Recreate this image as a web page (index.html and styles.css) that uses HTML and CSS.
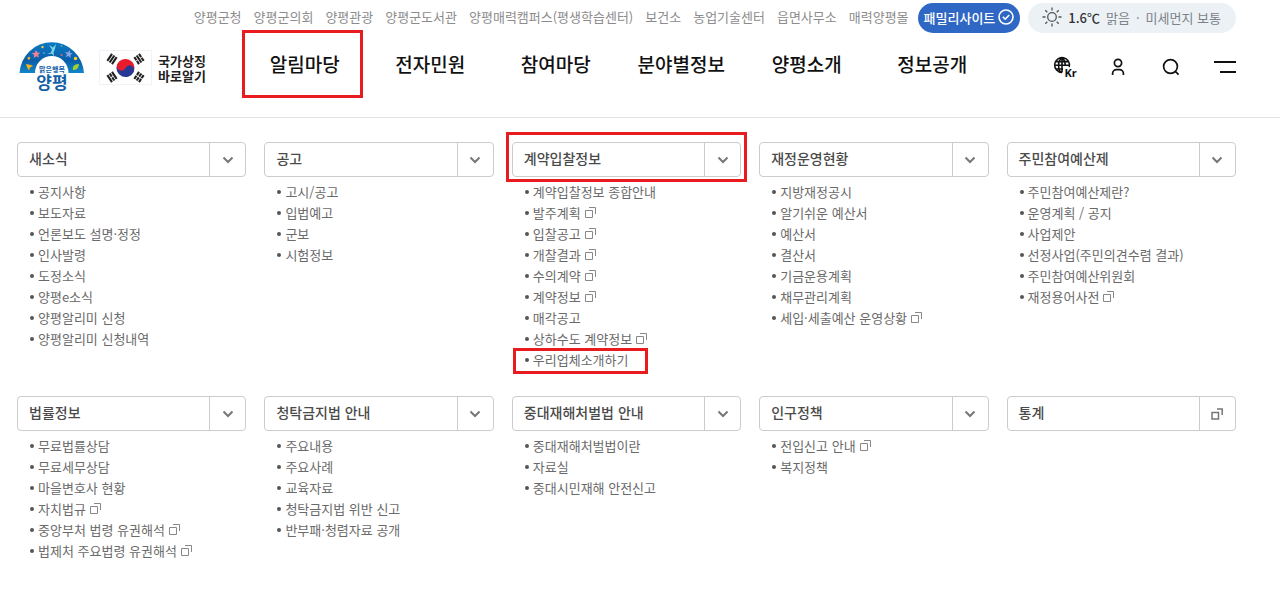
FILE: index.html
```html
<!DOCTYPE html>
<html lang="ko">
<head>
<meta charset="utf-8">
<meta name="viewport" content="width=device-width, initial-scale=1">
<title>양평군청</title>
<link rel="stylesheet" href="styles.css">
</head>
<body>
<svg class="defs" aria-hidden="true">
  <symbol id="chevron" viewBox="0 0 12 8"><path d="M1.500 1.500 6 6l4.500-4.500" fill="none" stroke="currentColor" stroke-width="2"/></symbol>
  <symbol id="external" viewBox="0 0 12 12"><path d="M.5 3.500h7v7h-7zM4 .5h6.500V7" fill="none" stroke="currentColor"/></symbol>
  <symbol id="external-bold" viewBox="0 0 12 12"><path d="M1 4.500h6.500V11H1zM6 1h5.200v6" fill="none" stroke="currentColor" stroke-width="1.500"/></symbol>
</svg>

<header class="header">
  <div class="topbar">
    <ul class="sites">
      <li><a href="#">양평군청</a></li>
      <li><a href="#">양평군의회</a></li>
      <li><a href="#">양평관광</a></li>
      <li><a href="#">양평군도서관</a></li>
      <li><a href="#">양평매력캠퍼스(평생학습센터)</a></li>
      <li><a href="#">보건소</a></li>
      <li><a href="#">농업기술센터</a></li>
      <li><a href="#">읍면사무소</a></li>
      <li><a href="#">매력양평몰</a></li>
    </ul>
    <button class="family" type="button">패밀리사이트
      <svg width="16" height="16" viewBox="0 0 16 16" fill="none" stroke="currentColor" stroke-width="1.600" aria-hidden="true"><circle cx="8" cy="8" r="7"/><path d="m4.800 7.800 2.400 2.400 4-4.200"/></svg>
    </button>
    <div class="weather">
      <svg width="20" height="20" viewBox="0 0 20 20" fill="none" stroke="currentColor" stroke-width="1.300" aria-hidden="true"><circle cx="10" cy="10" r="4.300"/><path d="M10 .5v3M10 16.500v3M.5 10h3M16.500 10h3M3.300 3.300l2 2M14.700 14.700l2 2M3.300 16.700l2-2M14.700 5.300l2-2"/></svg>
      <strong class="temp">1.6℃</strong>
      <span>맑음</span><span class="sep">·</span><span>미세먼지 보통</span>
    </div>
  </div>

  <div class="main">
    <div class="brand">
      <a class="logo" href="#" aria-label="맑은행복 양평">
        <svg width="66" height="55" viewBox="0 0 66 55">
          <defs><linearGradient id="arch" x1="0" y1="0" x2="0" y2="1"><stop offset="0" stop-color="#0b79c2"/><stop offset=".6" stop-color="#0c5ea9"/><stop offset="1" stop-color="#1186c8"/></linearGradient></defs>
          <path d="M.5 33A32.300 32.500 0 0 1 65 33H49.500A16.700 17 0 0 0 16 33z" fill="url(#arch)"/>
          <path d="m17 10 1.300 2.500 2.900.2-2.100 2 .8 2.900-2.700-1.300-2.400 1.700.3-2.900-2.300-1.900 2.900-.5z" fill="#f0809a"/>
          <path d="m37 4-3 3.500-4-2.500 3 4.500-1 3-4 1.500 5-.2 2 2.700-.5-4 1.500-4z" fill="#7fd6e8"/>
          <path d="m51 10-2 2.500-3-.5 2 2.500-1.500 2.500 3-1 2 2v-3.300l2-1.200-2.500-.7z" fill="#8aa5e6"/>
          <path d="m7 24 5 1 2 1-3 1.500-1 3-2-3.500zM10 16.500l1.500 1.500-1.500 2-1.800-1.700z" fill="#f9b51b"/>
          <path d="M54 30c-1-4 2-6 6-6-.5 4-2 6-6 6z" fill="#9bd12f"/>
          <circle cx="56.500" cy="18.500" r="1.700" fill="#f7d32a"/><circle cx="23.500" cy="7" r="1.200" fill="#f2cc3a"/>
          <circle cx="42.500" cy="15" r="1" fill="#ef6a5b"/><circle cx="42.500" cy="6" r=".8" fill="#7ed068"/><circle cx="25" cy="13" r=".8" fill="#6fc8ee"/>
          <text class="logo-small" x="33" y="32" text-anchor="middle">맑은행복</text>
          <text class="logo-name" x="33" y="49" text-anchor="middle">양평</text>
        </svg>
      </a>
      <a class="symbol" href="#">
        <svg width="54" height="36" viewBox="0 0 54 36" aria-hidden="true">
          <path d="M.5.5h52v34H.5z" fill="#fff" stroke="#f0f3f8"/>
          <g transform="rotate(24 26.500 18)"><path d="M17.500 18a9 9 0 0 1 18 0z" fill="#e81c2c"/><path d="M17.500 18a9 9 0 0 0 18 0z" fill="#263a95"/><circle cx="22" cy="18" r="4.500" fill="#e81c2c"/><circle cx="31" cy="18" r="4.500" fill="#263a95"/></g>
          <g stroke="#222" stroke-width="2.100">
            <path transform="translate(13 9) rotate(-56)" d="M-4.200-2.800h8.400M-4.200 0h8.400M-4.200 2.800h8.400"/>
            <path transform="translate(40 9) rotate(56)" d="M-4.200-2.800h3.800M.4-2.800h3.800M-4.200 0h8.400M-4.200 2.800h3.800M.4 2.800h3.800"/>
            <path transform="translate(13 27) rotate(56)" d="M-4.200-2.800h8.400M-4.200 0h3.800M.4 0h3.800M-4.200 2.800h8.400"/>
            <path transform="translate(40 27) rotate(-56)" d="M-4.200-2.800h3.800M.4-2.800h3.800M-4.200 0h3.800M.4 0h3.800M-4.200 2.800h3.800M.4 2.800h3.800"/>
          </g>
        </svg>
        <span>국가상징<br>바로알기</span>
      </a>
    </div>
    <nav class="gnb">
      <a class="marked" href="#">알림마당</a>
      <a href="#">전자민원</a>
      <a href="#">참여마당</a>
      <a href="#">분야별정보</a>
      <a href="#">양평소개</a>
      <a href="#">정보공개</a>
    </nav>
    <div class="tools">
      <button type="button" aria-label="언어 선택">
        <svg width="24" height="22" viewBox="0 0 24 22" fill="none" stroke="currentColor" stroke-width="1.600"><path d="M16.200 11A7.400 7.400 0 1 0 9 16.400M12.200 10c.1-4.500-1.200-7.400-3.200-7.400S5.600 5.400 5.600 9.300s1.400 7 3.400 7M9 2v14.500M1.500 9.300h15M2.800 5.600h12.400M2.800 13H10"/><text class="lang" x="11.500" y="20.500">Kr</text></svg>
      </button>
      <button type="button" aria-label="로그인">
        <svg width="16" height="18" viewBox="0 0 16 18" fill="none" stroke="currentColor" stroke-width="1.700"><circle cx="7" cy="5" r="3.600"/><path d="M1.600 17v-1.500a3.800 3.800 0 0 1 3.800-3.800h3.200a3.800 3.800 0 0 1 3.800 3.800V17"/></svg>
      </button>
      <button type="button" aria-label="검색">
        <svg width="18" height="18" viewBox="0 0 18 18" fill="none" stroke="currentColor" stroke-width="1.700"><circle cx="8.500" cy="8.500" r="6.900"/><path d="m13.300 13.300 3.300 3.300"/></svg>
      </button>
      <button type="button" aria-label="전체메뉴">
        <svg width="22" height="14" viewBox="0 0 22 14" stroke="currentColor" stroke-width="2"><path d="M0 2h22M6 12h16"/></svg>
      </button>
    </div>
  </div>
</header>

<main class="menu">
  <section>
    <div class="head"><a href="#">새소식</a><button type="button" aria-label="새소식 펼치기"><svg class="chev"><use href="#chevron"/></svg></button></div>
    <ul class="list">
      <li><a href="#">공지사항</a></li>
      <li><a href="#">보도자료</a></li>
      <li><a href="#">언론보도 설명·정정</a></li>
      <li><a href="#">인사발령</a></li>
      <li><a href="#">도정소식</a></li>
      <li><a href="#">양평e소식</a></li>
      <li><a href="#">양평알리미 신청</a></li>
      <li><a href="#">양평알리미 신청내역</a></li>
    </ul>
  </section>
  <section>
    <div class="head"><a href="#">공고</a><button type="button" aria-label="공고 펼치기"><svg class="chev"><use href="#chevron"/></svg></button></div>
    <ul class="list">
      <li><a href="#">고시/공고</a></li>
      <li><a href="#">입법예고</a></li>
      <li><a href="#">군보</a></li>
      <li><a href="#">시험정보</a></li>
    </ul>
  </section>
  <section>
    <div class="head marked"><a href="#">계약입찰정보</a><button type="button" aria-label="계약입찰정보 펼치기"><svg class="chev"><use href="#chevron"/></svg></button></div>
    <ul class="list">
      <li><a href="#">계약입찰정보 종합안내</a></li>
      <li><a href="#">발주계획<svg class="ext"><use href="#external"/></svg></a></li>
      <li><a href="#">입찰공고<svg class="ext"><use href="#external"/></svg></a></li>
      <li><a href="#">개찰결과<svg class="ext"><use href="#external"/></svg></a></li>
      <li><a href="#">수의계약<svg class="ext"><use href="#external"/></svg></a></li>
      <li><a href="#">계약정보<svg class="ext"><use href="#external"/></svg></a></li>
      <li><a href="#">매각공고</a></li>
      <li><a href="#">상하수도 계약정보<svg class="ext"><use href="#external"/></svg></a></li>
      <li class="marked"><a href="#">우리업체소개하기</a></li>
    </ul>
  </section>
  <section>
    <div class="head"><a href="#">재정운영현황</a><button type="button" aria-label="재정운영현황 펼치기"><svg class="chev"><use href="#chevron"/></svg></button></div>
    <ul class="list">
      <li><a href="#">지방재정공시</a></li>
      <li><a href="#">알기쉬운 예산서</a></li>
      <li><a href="#">예산서</a></li>
      <li><a href="#">결산서</a></li>
      <li><a href="#">기금운용계획</a></li>
      <li><a href="#">채무관리계획</a></li>
      <li><a href="#">세입·세출예산 운영상황<svg class="ext"><use href="#external"/></svg></a></li>
    </ul>
  </section>
  <section>
    <div class="head"><a href="#">주민참여예산제</a><button type="button" aria-label="주민참여예산제 펼치기"><svg class="chev"><use href="#chevron"/></svg></button></div>
    <ul class="list">
      <li><a href="#">주민참여예산제란?</a></li>
      <li><a href="#">운영계획 / 공지</a></li>
      <li><a href="#">사업제안</a></li>
      <li><a href="#">선정사업(주민의견수렴 결과)</a></li>
      <li><a href="#">주민참여예산위원회</a></li>
      <li><a href="#">재정용어사전<svg class="ext"><use href="#external"/></svg></a></li>
    </ul>
  </section>
  <section>
    <div class="head"><a href="#">법률정보</a><button type="button" aria-label="법률정보 펼치기"><svg class="chev"><use href="#chevron"/></svg></button></div>
    <ul class="list">
      <li><a href="#">무료법률상담</a></li>
      <li><a href="#">무료세무상담</a></li>
      <li><a href="#">마을변호사 현황</a></li>
      <li><a href="#">자치법규<svg class="ext"><use href="#external"/></svg></a></li>
      <li><a href="#">중앙부처 법령 유권해석<svg class="ext"><use href="#external"/></svg></a></li>
      <li><a href="#">법제처 주요법령 유권해석<svg class="ext"><use href="#external"/></svg></a></li>
    </ul>
  </section>
  <section>
    <div class="head"><a href="#">청탁금지법 안내</a><button type="button" aria-label="청탁금지법 안내 펼치기"><svg class="chev"><use href="#chevron"/></svg></button></div>
    <ul class="list">
      <li><a href="#">주요내용</a></li>
      <li><a href="#">주요사례</a></li>
      <li><a href="#">교육자료</a></li>
      <li><a href="#">청탁금지법 위반 신고</a></li>
      <li><a href="#">반부패·청렴자료 공개</a></li>
    </ul>
  </section>
  <section>
    <div class="head"><a href="#">중대재해처벌법 안내</a><button type="button" aria-label="중대재해처벌법 안내 펼치기"><svg class="chev"><use href="#chevron"/></svg></button></div>
    <ul class="list">
      <li><a href="#">중대재해처벌법이란</a></li>
      <li><a href="#">자료실</a></li>
      <li><a href="#">중대시민재해 안전신고</a></li>
    </ul>
  </section>
  <section>
    <div class="head"><a href="#">인구정책</a><button type="button" aria-label="인구정책 펼치기"><svg class="chev"><use href="#chevron"/></svg></button></div>
    <ul class="list">
      <li><a href="#">전입신고 안내<svg class="ext"><use href="#external"/></svg></a></li>
      <li><a href="#">복지정책</a></li>
    </ul>
  </section>
  <section>
    <div class="head"><a href="#">통계</a><button type="button" aria-label="통계 새창 열기"><svg class="newwin"><use href="#external-bold"/></svg></button></div>
  </section>
</main>
</body>
</html>
```

FILE: styles.css
```css
*, *::before, *::after { box-sizing: border-box; }

body {
  margin: 0;
  background: #fff;
  color: #6a6a6a;
  font-family: "Noto Sans CJK KR", "Noto Sans", sans-serif;
  font-size: 13px;
  line-height: 21px;
}

a { color: inherit; text-decoration: none; }
ul { list-style: none; margin: 0; padding: 0; }
button { padding: 0; border: 0; background: none; color: inherit; font: inherit; cursor: pointer; }
svg { display: block; }
.defs { position: absolute; width: 0; height: 0; }

.header { border-bottom: 1px solid #e3e3e3; padding: 3px 44px 22px 17px; }

.topbar { display: flex; justify-content: flex-end; align-items: center; gap: 8px; height: 30px; white-space: nowrap; }
.sites { display: flex; gap: 12px; margin-right: 1px; padding-bottom: 4px; color: #8c8c8c; }
.family {
  display: flex; align-items: center; gap: 3px;
  height: 30px; padding: 0 6px 2px;
  border-radius: 15px; background: #2f68c4; color: #fff; font-weight: 500;
}
.weather {
  display: flex; align-items: center; gap: 6px;
  height: 30px; padding: 0 15px 2px 14px;
  border-radius: 15px; background: #ecf1f5; color: #7c8288;
}
.weather svg { color: #555; }
.temp { color: #333; font-weight: 500; }
.sep { line-height: 1; }

.main { display: flex; align-items: center; min-height: 62px; }
.brand { display: flex; align-items: center; gap: 14px; flex: 0 0 225px; padding: 7px 0 0 2px; }
.logo-small { font-size: 7px; font-weight: 700; fill: #155fa8; }
.logo-name { font-size: 17px; font-weight: 700; fill: #155fa8; }
.symbol { display: flex; align-items: center; gap: 5px; color: #222; font-weight: 700; line-height: 15px; }

.gnb { display: flex; flex: 1; color: #111; font-size: 19px; font-weight: 500; line-height: 28px; }
.gnb a { position: relative; flex: 1 1 0; text-align: center; white-space: nowrap; }
.tools { display: flex; align-items: center; justify-content: space-between; flex: 0 0 241px; padding: 6px 0 0 58px; color: #111; }
.lang { font-family: "Noto Sans", sans-serif; font-size: 11px; font-weight: 700; fill: currentColor; stroke: none; }

.marked { position: relative; }
.marked::after { content: ""; position: absolute; border: 3px solid #e81c1f; pointer-events: none; }
.gnb .marked::after { inset: -20px 5px -20px 0; }
.head.marked::after { inset: -11px -7px -6px; }
.list .marked::after { top: -1px; bottom: -4px; left: -20px; width: 135px; }

.menu {
  display: grid; grid-template-columns: repeat(5, minmax(0, 1fr)); gap: 26px 18px;
  padding: 24px 44px 34px 17px;
}
.head { display: flex; height: 35px; border: 1px solid #ccc; border-radius: 4px; color: #4a4a4a; font-size: 14px; font-weight: 500; }
.head a { flex: 1; padding: 0 11px; line-height: 31px; }
.head button { display: grid; place-items: center; width: 36px; border-left: 1px solid #ccc; color: #777; }
.chev { width: 12px; height: 8px; }
.newwin { width: 12px; height: 12px; }

.list { padding: 4px 0 0 21px; }
.list li { position: relative; }
.list li::before { content: ""; position: absolute; top: 9px; left: -8px; width: 4px; height: 4px; border-radius: 50%; background: #555; }
.list a { display: flex; align-items: center; gap: 4px; white-space: nowrap; }
.ext { width: 12px; height: 12px; color: #888; }
```
